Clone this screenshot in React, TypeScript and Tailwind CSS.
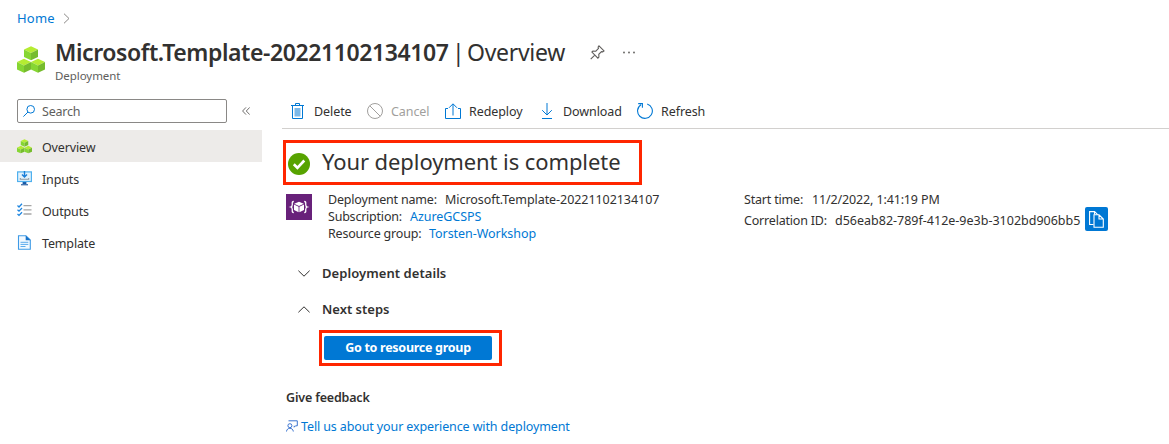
import React from "react";

function Cubes({ className }: { className: string }) {
  const cube = (x: number, y: number) => (
    <g transform={`translate(${x} ${y})`}>
      <path d="M0 3.3 7 0l7 3.3L7 6.8z" fill="#b5ec32" />
      <path d="M0 3.3 7 6.8V14L0 10.8z" fill="#86d633" />
      <path d="M14 3.3 7 6.8V14l7-3.2z" fill="#76bc2d" />
    </g>
  );
  return (
    <svg className={className} viewBox="0 0 28 28">
      {cube(7, 0.3)}
      {cube(0, 12.8)}
      {cube(14, 12.8)}
    </svg>
  );
}

function InputsIcon() {
  return (
    <svg className="h-[15px] w-[15px]" viewBox="0 0 15 15">
      <path d="M5.6 10h3.8v3.6H5.6z" fill="#1559a8" />
      <path d="M4 13h7v1.4H4z" fill="#4a78b0" />
      <rect x=".6" y=".9" width="13.8" height="9.6" fill="#e3f3fd" stroke="#4fb0ee" strokeWidth="1.2" />
      <path d="M7.5 0v5.8M5 3.6l2.5 2.5L10 3.6" fill="none" stroke="#1a7fd8" strokeWidth="1.4" />
      <path d="M3.3 7v1.3h8.4V7" fill="none" stroke="#8f9aa3" strokeWidth="1.1" />
    </svg>
  );
}

function OutputsIcon() {
  return (
    <svg className="h-[15px] w-[15px]" viewBox="0 0 15 15" fill="none">
      <path d="M.5 2.6 2 4 5 .8M.5 6.8 2 8.2 5 5M.5 11 2 12.4 5 9.2" stroke="#1f86e0" strokeWidth="1.3" />
      <path d="M6.5 2.7h8M6.5 6.8h8M6.5 11h8" stroke="#a6a6a6" strokeWidth="1.3" />
    </svg>
  );
}

function TemplateIcon() {
  return (
    <svg className="h-[15px] w-[15px]" viewBox="0 0 15 15" fill="none">
      <path d="M1.5.7h7.4l4.4 4.3v9.3H1.5z" fill="#f2f9ff" stroke="#3d9ae6" strokeWidth="1.1" />
      <path d="M8.7.5v4.7h4.8z" fill="#1672c9" />
      <path d="M3.5 7.3h7.8M3.5 9.4h7.8M3.5 11.5h5" stroke="#5babec" />
    </svg>
  );
}

function DeleteIcon() {
  return (
    <svg className="h-4 w-4" viewBox="0 0 16 16" fill="none" stroke="#0078d4">
      <path d="M5.5 2V.5h4V2M1 2.5h13M2.5 2.5v13h10v-13" />
      <path d="M4.5 5h6v8.500h-6z" fill="#7cb9e8" stroke="none" />
    </svg>
  );
}

function CancelIcon() {
  return (
    <svg className="h-4 w-4" viewBox="0 0 16 16" fill="none" stroke="#a19f9d">
      <circle cx="8" cy="8" r="7.5" />
      <path d="m2.7 2.7 10.6 10.6" />
    </svg>
  );
}

function RedeployIcon() {
  return (
    <svg className="h-4 w-4" viewBox="0 0 16 16" fill="none" stroke="#0078d4">
      <path d="M3 5.5H.5v10h15v-10H13M8 12.5V1M4 4.8 8 .8l4 4" />
    </svg>
  );
}

function DownloadIcon() {
  return (
    <svg className="h-4 w-4" viewBox="0 0 16 16" fill="none" stroke="#0078d4">
      <path d="M8 0v12M3.2 7.2 8 12l4.8-4.8M3 15.5h10" />
    </svg>
  );
}

function RefreshIcon() {
  return (
    <svg className="h-4 w-4" viewBox="0 0 16 16" fill="none" stroke="#0078d4" strokeWidth="1.1">
      <path d="M10.2.9A7.4 7.4 0 1 1 4 1.7M1.2.6h4.2v4.2" />
    </svg>
  );
}

function Command({ icon, label, className }: { icon: React.ReactNode; label: string; className: string }) {
  return (
    <button className={`flex shrink-0 items-center whitespace-nowrap text-left ${className}`}>
      <span className="-mt-0.5">{icon}</span>
      <span className="ml-2">{label}</span>
    </button>
  );
}

function NavItem({ icon, label, active }: { icon: React.ReactNode; label: string; active?: boolean }) {
  return (
    <a className={`flex h-8 items-center pl-[17px] tracking-[-0.15px] ${active ? "bg-[#edebe9]" : ""}`}>
      <span className="pt-px">{icon}</span>
      <span className="ml-[10px] pt-[3px]">{label}</span>
    </a>
  );
}

export default function App() {
  return (
    <div className="h-[444px] w-[1169px] overflow-hidden whitespace-nowrap bg-white font-['Noto_Sans','Open_Sans',sans-serif] text-[12.5px] leading-[17px] text-[#323130]">
      <nav className="flex h-[37px] items-center pl-[17px]">
        <a className="w-[38px] text-[13px] tracking-[0.2px] text-[#0078d4]">Home</a>
        <svg className="ml-2 h-[11px] w-[7px]" viewBox="0 0 7 11" fill="none" stroke="#8a8886">
          <path d="m1 .7 5 4.8-5 4.8" />
        </svg>
      </nav>
      <header className="flex h-[58px] pl-[17px]">
        <Cubes className="mt-[9px] h-7 w-7" />
        <div className="ml-[10px]">
          <div className="flex h-[30px] items-center">
            <h1 className="flex w-[511px] text-[23px] leading-[30px]">
              <span className="w-[397px] font-semibold tracking-[-0.41px]">Microsoft.Template-20221102134107</span>
              <span className="w-[15px]">|</span>
              <span className="tracking-[-0.3px]">Overview</span>
            </h1>
            <svg className="ml-[24px] h-[15px] w-[15px]" viewBox="0 0 15 15" fill="none" stroke="#605e5c" strokeWidth="1.1">
              <path d="m9 .9 5 5-1.3.9-1.2-.2-2.7 2.7.1 2.8-1 1-6-6 1-1 2.9.1 2.7-2.8-.4-1.3zM4.8 10.1.7 14.2" />
            </svg>
            <svg className="ml-[18px] h-[3px] w-[12px]" viewBox="0 0 12 3" fill="#605e5c">
              <circle cx="1" cy="1.5" r=".9" />
              <circle cx="6" cy="1.5" r=".9" />
              <circle cx="11" cy="1.5" r=".9" />
            </svg>
          </div>
          <p className="text-[11.5px] leading-[18px] tracking-[-0.06px] text-[#605e5c]">Deployment</p>
        </div>
      </header>
      <div className="flex">
        <aside className="w-[262px] shrink-0 pt-1">
          <div className="mb-[7px] flex h-6 items-center pl-[17px]">
            <div className="flex h-6 w-[210px] items-center rounded-[2px] border border-[#8a8886] pl-[5px] text-[#605e5c]">
              <svg className="h-3 w-3" viewBox="0 0 12 12" fill="none" stroke="#0078d4">
                <circle cx="7.7" cy="4.3" r="3.8" />
                <path d="M5 7 .4 11.6" />
              </svg>
              <span className="ml-[7px] tracking-[-0.2px]">Search</span>
            </div>
            <svg className="ml-[15px] h-2 w-2" viewBox="0 0 8 8" fill="none" stroke="#605e5c" strokeWidth=".9">
              <path d="M4 .4.6 4 4 7.6M7.7.4 4.3 4l3.4 3.6" />
            </svg>
          </div>
          <NavItem active icon={<Cubes className="h-[15px] w-[15px]" />} label="Overview" />
          <NavItem icon={<InputsIcon />} label="Inputs" />
          <NavItem icon={<OutputsIcon />} label="Outputs" />
          <NavItem icon={<TemplateIcon />} label="Template" />
        </aside>
        <main className="ml-5 w-[887px]">
          <div className="flex h-[34px] border-b border-[#d2d0ce] pl-2 tracking-[-0.08px]">
            <Command className="w-[77px]" icon={<DeleteIcon />} label="Delete" />
            <Command className="w-[78px] text-[#a19f9d]" icon={<CancelIcon />} label="Cancel" />
            <Command className="w-[94px]" icon={<RedeployIcon />} label="Redeploy" />
            <Command className="w-[98px]" icon={<DownloadIcon />} label="Download" />
            <Command className="w-[90px]" icon={<RefreshIcon />} label="Refresh" />
          </div>
          <section className="ml-px mt-[11px] flex h-[45px] w-[359px] items-center border-[3px] border-[#ff2600] pl-[2px]">
            <svg className="mt-[2px] h-[22px] w-[22px]" viewBox="0 0 22 22">
              <circle cx="11" cy="11" r="11" fill="#57a300" />
              <path d="m5.800 11.300 3.600 3.500 6.900-7.300" fill="none" stroke="#fff" strokeWidth="2.6" />
            </svg>
            <h2 className="-mt-[2px] ml-[12px] text-[22px] tracking-[-0.09px]">Your deployment is complete</h2>
          </section>
          <section className="mt-[6px] flex pl-1">
            <svg className="mt-[3px] h-[26px] w-[26px]" viewBox="0 0 26 26">
              <path d="M0 0h26v26H0z" fill="#68217a" />
              <path d="M7.8 7.5c-2 0-1.5 1.3-1.5 3 0 1.5-.5 2.2-1.5 2.5 1 .3 1.5 1 1.5 2.5 0 1.7-.5 3 1.5 3M18.2 7.5c2 0 1.5 1.3 1.5 3 0 1.5.5 2.2 1.5 2.5-1 .3-1.5 1-1.5 2.5 0 1.7.5 3-1.5 3" fill="none" stroke="#fff" strokeWidth="1.3" />
              <path d="m13 7.7 4.8 2-4.8 2.2-4.8-2.2zM8 10.6l4.6 2.1v5.5L8 16zM18 10.6l-4.600 2.100v5.500L18 16z" fill="#fff" />
            </svg>
            <dl className="ml-4 w-[416px]">
              <div className="flex gap-2"><dt className="w-[109px] tracking-[-0.19px]">Deployment name:</dt><dd className="tracking-[-0.06px]">Microsoft.Template-20221102134107</dd></div>
              <div className="flex gap-2"><dt className="w-[74px] tracking-[-0.22px]">Subscription:</dt><dd className="tracking-[-0.05px] text-[#0078d4]">AzureGCSPS</dd></div>
              <div className="flex gap-2"><dt className="w-[93px] tracking-[-0.19px]">Resource group:</dt><dd className="tracking-[-0.05px] text-[#0078d4]">Torsten-Workshop</dd></div>
            </dl>
            <dl>
              <div className="flex gap-2"><dt className="w-[60px] tracking-[-0.19px]">Start time:</dt><dd className="tracking-[-0.14px]">11/2/2022, 1:41:19 PM</dd></div>
              <div className="flex h-[25px] items-center gap-2">
                <dt className="w-[83px] tracking-[-0.19px]">Correlation ID:</dt>
                <dd className="flex items-center">
                  <span className="w-[250px]">d56eab82-789f-412e-9e3b-3102bd906bb5</span>
                  <button className="-mt-[3px] flex h-6 w-[23px] items-center justify-center rounded-[2px] bg-[#0078d4]">
                    <svg className="h-[17px] w-[15px]" viewBox="0 0 15 17" fill="none" stroke="#fff" strokeWidth="1.1">
                      <path d="M4.5 13.500H.6V.6h5l3 3M5.500.6v3" />
                      <path d="M5 3.800h5l4.300 4.200v8.300H5zM10 3.800V8h4.300" />
                    </svg>
                  </button>
                </dd>
              </div>
            </dl>
          </section>
          <section className="mt-[13px] pl-4">
            <div className="flex h-[36px] items-center">
              <svg className="mt-px h-[7px] w-3" viewBox="0 0 12 7" fill="none" stroke="#323130"><path d="m.4.7 5.6 5.500L11.600.7" /></svg>
              <h3 className="ml-3 text-[13px] font-semibold tracking-[0.06px]">Deployment details</h3>
            </div>
            <div className="flex h-[36px] items-center">
              <svg className="mt-px h-[7px] w-3" viewBox="0 0 12 7" fill="none" stroke="#323130"><path d="M.4 6.300 6 .8l5.600 5.500" /></svg>
              <h3 className="ml-3 text-[13px] font-semibold">Next steps</h3>
            </div>
            <div className="ml-[21px] mt-[3px] h-[36px] w-[183px] border-[3px] border-[#ff2600] pl-[2px] pt-[3px]">
              <button className="flex h-6 w-[168px] justify-center rounded-[2px] bg-[#0078d4] pt-[3px] font-bold tracking-[-0.28px] text-white">Go to resource group</button>
            </div>
          </section>
          <section className="mt-[23px] pl-1">
            <h3 className="font-semibold tracking-[-0.17px]">Give feedback</h3>
            <a className="mt-[12px] flex items-center text-[#0078d4]">
              <svg className="-mt-[2px] h-3 w-3" viewBox="0 0 12 12" fill="none" stroke="#3b74d0">
                <path d="M2.500.8h8.800v5H9.500L8.200 7.200V5.800M.5 11.500c.3-4.300 6.500-4.300 6.800 0" />
                <circle cx="3.900" cy="5.700" r="2" />
              </svg>
              <span className="ml-[3px] tracking-[-0.12px]">Tell us about your experience with deployment</span>
            </a>
          </section>
        </main>
      </div>
    </div>
  );
}
